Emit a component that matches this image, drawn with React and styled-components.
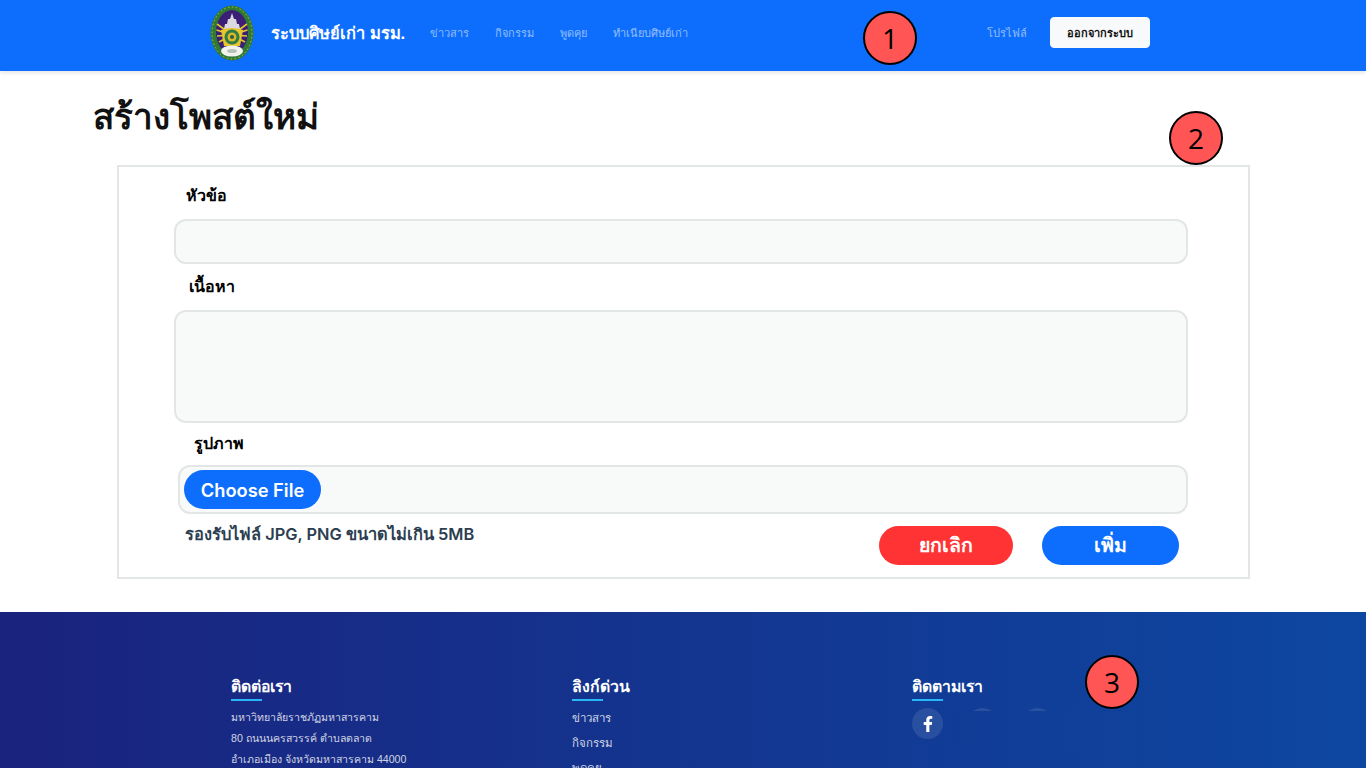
import styled, { createGlobalStyle } from 'styled-components';

const GlobalStyle = createGlobalStyle`
  * {
    box-sizing: border-box;
  }

  html,
  body {
    margin: 0;
    padding: 0;
    height: 768px;
    overflow: hidden;
    background: #fff;
    font-family: 'Noto Sans', 'Liberation Sans', sans-serif;
  }
`;

const Page = styled.div`
  position: relative;
  width: 1366px;
`;

const Navbar = styled.nav`
  height: 71px;
  background: #0d6efd;
  box-shadow: 0 2px 4px rgba(0, 0, 0, 0.1);
  padding: 0 216px 6px 210px;
  display: flex;
  align-items: center;
  font-family: 'Liberation Sans', sans-serif;
`;

const Brand = styled.div`
  display: flex;
  align-items: center;
  gap: 17px;
  color: #fff;
  font-size: 16.5px;
  font-weight: 700;
  margin-right: 25px;
`;

const NavLinks = styled.div`
  display: flex;
  gap: 26px;
`;

const NavLink = styled.a`
  color: rgba(255, 255, 255, 0.55);
  font-size: 11px;
  font-weight: 500;
`;

const NavRight = styled.div`
  margin-left: auto;
  display: flex;
  align-items: center;
  gap: 23px;
`;

const LogoutButton = styled.button`
  width: 100px;
  height: 31px;
  border: 1px solid #f8f9fa;
  border-radius: 4px;
  background: #f8f9fa;
  color: #111;
  font-family: inherit;
  font-size: 11px;
  font-weight: 700;
  padding: 0;
`;

const Title = styled.h1`
  margin: 0;
  padding: 18px 0 0 93px;
  height: 94px;
  font-size: 35px;
  line-height: 54px;
  font-weight: 700;
  color: #111;
`;

const FormBox = styled.form`
  margin-left: 117px;
  width: 1133px;
  height: 414px;
  border: 2px solid #e2e6e4;
  padding: 16px 60px 0 55px;
  font-family: 'Inter', 'Noto Sans', sans-serif;
`;

const Label = styled.label`
  display: block;
  color: #000;
  font-size: 16px;
  line-height: 24px;
  font-weight: 700;
  padding-left: ${(p) => p.$indent}px;
  margin-bottom: ${(p) => p.$gap}px;
`;

const Field = styled.div`
  height: ${(p) => p.$height}px;
  background: #f8faf9;
  border: 2px solid #e2e6e4;
  border-radius: 12px;
  margin-bottom: ${(p) => p.$gap}px;
`;

const FileField = styled(Field)`
  margin-left: 4px;
  padding: 3px 4px;
`;

const FileButton = styled.button`
  width: 137px;
  height: 39px;
  border: none;
  border-radius: 20px;
  background: #0d6efd;
  color: #fff;
  font-family: inherit;
  font-size: 18.3px;
  font-weight: 600;
  padding: 0;
`;

const BottomRow = styled.div`
  display: flex;
  justify-content: space-between;
  align-items: flex-start;
  padding: 0 9px 0 11px;
`;

const Hint = styled.span`
  color: #2c3e50;
  font-size: 16.4px;
  line-height: 24px;
  font-weight: 600;
  margin-top: 1px;
`;

const Actions = styled.div`
  display: flex;
  gap: 29px;
  margin-top: 5px;
`;

const ActionButton = styled.button`
  width: ${(p) => p.$width}px;
  height: 39px;
  border: none;
  border-radius: 20px;
  background: ${(p) => p.$color};
  color: #fff;
  font-family: inherit;
  font-size: 19.5px;
  font-weight: 700;
  padding: 0;
`;

const Footer = styled.footer`
  margin-top: 33px;
  height: 300px;
  background: linear-gradient(90deg, #1a237e 0%, #0d47a1 100%);
  padding: 64px 0 0 231px;
  display: grid;
  grid-template-columns: 341px 340px 300px;
  font-family: 'Liberation Sans', sans-serif;
`;

const FooterTitle = styled.h5`
  margin: 0 0 ${(p) => p.$gap}px;
  width: fit-content;
  color: #fff;
  font-size: 15.8px;
  line-height: 22px;
  font-weight: 700;
  padding-bottom: 3px;
  position: relative;

  &::after {
    content: '';
    position: absolute;
    left: 0;
    bottom: 0;
    width: 31px;
    height: 2px;
    background: #29b6f6;
  }
`;

const FooterText = styled.p`
  margin: 0;
  color: rgba(255, 255, 255, 0.8);
  font-size: 10.6px;
  line-height: 21px;
`;

const FooterLink = styled.a`
  display: block;
  color: rgba(255, 255, 255, 0.8);
  font-size: 11.5px;
  line-height: 25px;
`;

const SocialRow = styled.div`
  position: relative;
  display: flex;
  gap: 24px;
`;

const SocialIcon = styled.a`
  width: 31px;
  height: 31px;
  border-radius: 50%;
  background: rgba(255, 255, 255, 0.1);
  display: flex;
  align-items: center;
  justify-content: center;
`;

const SocialCover = styled.div`
  position: absolute;
  left: 41px;
  top: 3px;
  width: 133px;
  height: 40px;
  background: linear-gradient(90deg, #113c96, #10409a);
`;

const Marker = styled.div`
  position: absolute;
  left: ${(p) => p.$x - 27}px;
  top: ${(p) => p.$y - 27}px;
  width: 54px;
  height: 54px;
  border-radius: 50%;
  border: 2px solid #000;
  background: #ff5555;
  color: #000;
  font-family: 'Open Sans', sans-serif;
  font-size: 28px;
  display: flex;
  align-items: center;
  justify-content: center;
`;

const Logo = () => (
  <svg width="44" height="56" viewBox="0 0 44 56">
    <ellipse cx="22" cy="28" rx="21.5" ry="27.5" fill="#2f7a35" />
    <ellipse cx="22" cy="28" rx="20" ry="26" fill="none" stroke="#b7b84a" strokeWidth="1" strokeDasharray="1.5 2.5" />
    <ellipse cx="22" cy="27" rx="16" ry="22" fill="#3a1f74" />
    <g stroke="#e8c52c" strokeWidth="1.6">
      <path d="M22 30 L7 19" />
      <path d="M22 30 L6.5 25" />
      <path d="M22 30 L7 31" />
      <path d="M22 30 L9 37" />
      <path d="M22 30 L37 19" />
      <path d="M22 30 L37.5 25" />
      <path d="M22 30 L37 31" />
      <path d="M22 30 L35 37" />
    </g>
    <path d="M22 8 L24 14 H26 L27 19 H29 L30 24 H14 L15 19 H17 L18 14 H20 Z" fill="#dcd8e2" />
    <path d="M11 25 Q22 21 33 25 L30 41 H14 Z" fill="#e8c52c" />
    <circle cx="22" cy="32" r="7.5" fill="#2e7d46" />
    <circle cx="22" cy="32" r="4.5" fill="#d8b92a" />
    <circle cx="22" cy="32" r="2" fill="#2e5d46" />
    <ellipse cx="22" cy="46" rx="11" ry="5.5" fill="#f2f2ee" />
    <ellipse cx="22" cy="46" rx="5" ry="2" fill="#b9c0b8" />
  </svg>
);

const FacebookIcon = () => (
  <svg width="16" height="16" viewBox="0 0 320 512" fill="#fff">
    <path d="M279 288l14-93h-89v-60c0-25 12-50 52-50h41V7s-37-7-72-7c-73 0-121 45-121 125v70H23v93h81v224h100V288z" />
  </svg>
);

export default function App() {
  return (
    <Page>
      <GlobalStyle />
      <Navbar>
        <Brand>
          <Logo />
          ระบบศิษย์เก่า มรม.
        </Brand>
        <NavLinks>
          <NavLink>ข่าวสาร</NavLink>
          <NavLink>กิจกรรม</NavLink>
          <NavLink>พูดคุย</NavLink>
          <NavLink>ทำเนียบศิษย์เก่า</NavLink>
        </NavLinks>
        <NavRight>
          <NavLink>โปรไฟล์</NavLink>
          <LogoutButton>ออกจากระบบ</LogoutButton>
        </NavRight>
      </Navbar>

      <Title>สร้างโพสต์ใหม่</Title>

      <FormBox>
        <Label $indent={12} $gap={12}>หัวข้อ</Label>
        <Field $height={45} $gap={10} />
        <Label $indent={15} $gap={12}>เนื้อหา</Label>
        <Field $height={113} $gap={8} />
        <Label $indent={20} $gap={10}>รูปภาพ</Label>
        <FileField $height={49} $gap={7}>
          <FileButton type="button">Choose File</FileButton>
        </FileField>
        <BottomRow>
          <Hint>รองรับไฟล์ JPG, PNG ขนาดไม่เกิน 5MB</Hint>
          <Actions>
            <ActionButton type="button" $width={134} $color="#ff3333">ยกเลิก</ActionButton>
            <ActionButton type="button" $width={137} $color="#0d6efd">เพิ่ม</ActionButton>
          </Actions>
        </BottomRow>
      </FormBox>

      <Footer>
        <div>
          <FooterTitle $gap={6}>ติดต่อเรา</FooterTitle>
          <FooterText>มหาวิทยาลัยราชภัฏมหาสารคาม</FooterText>
          <FooterText>80 ถนนนครสวรรค์ ตำบลตลาด</FooterText>
          <FooterText>อำเภอเมือง จังหวัดมหาสารคาม 44000</FooterText>
        </div>
        <div>
          <FooterTitle $gap={5}>ลิงก์ด่วน</FooterTitle>
          <FooterLink>ข่าวสาร</FooterLink>
          <FooterLink>กิจกรรม</FooterLink>
          <FooterLink>พูดคุย</FooterLink>
        </div>
        <div>
          <FooterTitle $gap={7}>ติดตามเรา</FooterTitle>
          <SocialRow>
            <SocialIcon><FacebookIcon /></SocialIcon>
            <SocialIcon />
            <SocialIcon />
            <SocialCover />
          </SocialRow>
        </div>
      </Footer>

      <Marker $x={890} $y={38}>1</Marker>
      <Marker $x={1196} $y={138}>2</Marker>
      <Marker $x={1112} $y={682}>3</Marker>
    </Page>
  );
}
